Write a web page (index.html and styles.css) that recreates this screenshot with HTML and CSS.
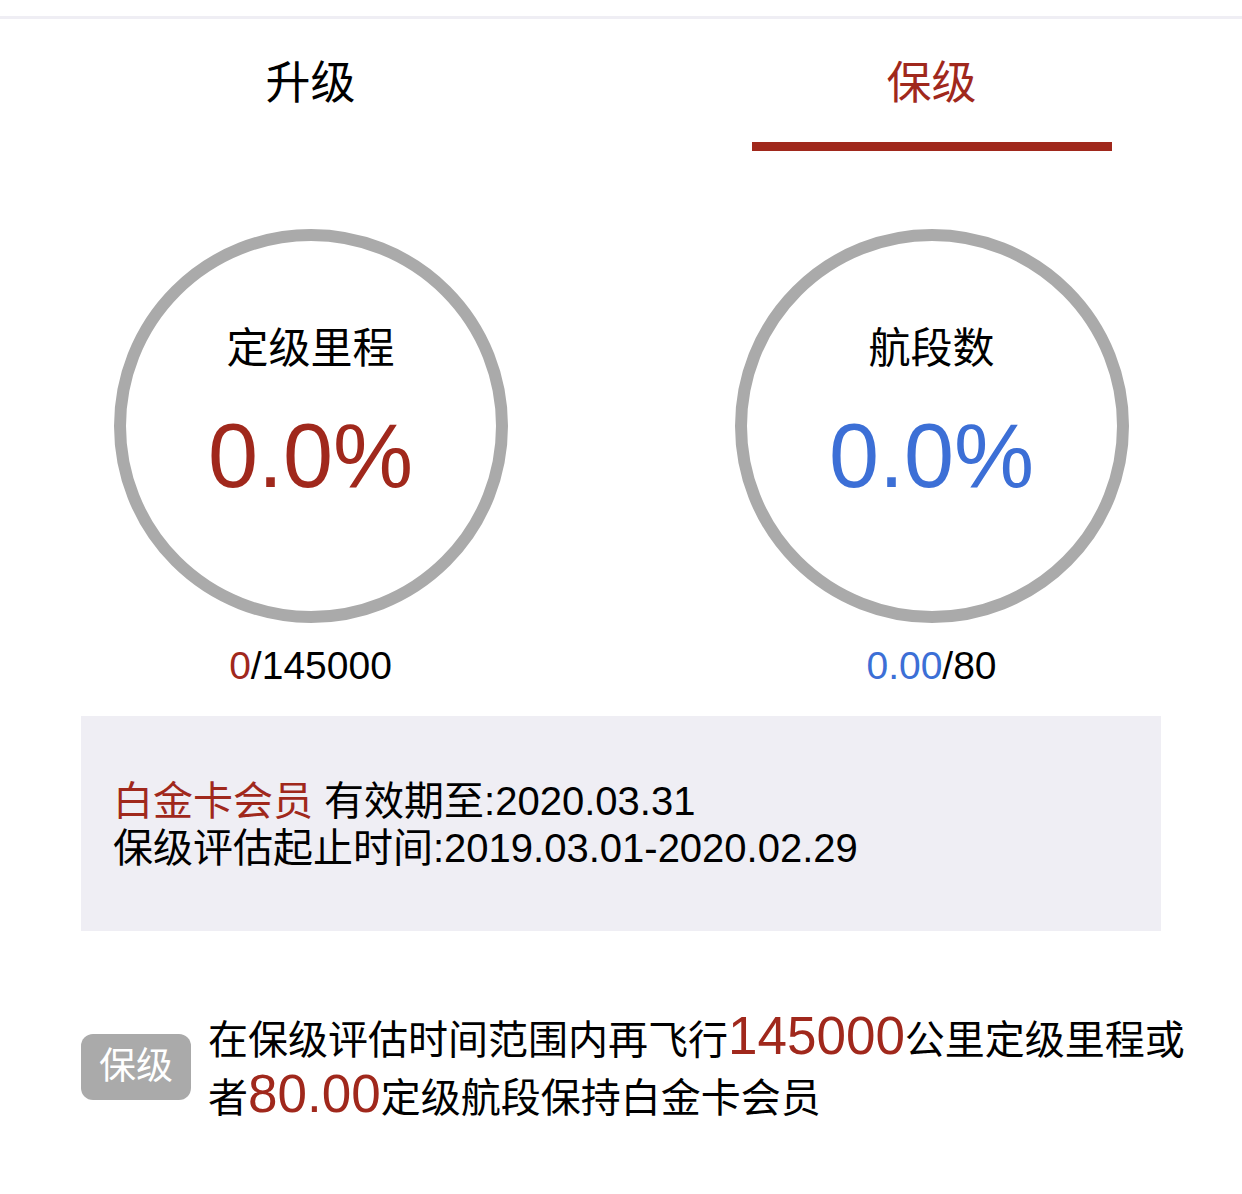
FILE: index.html
```html
<!DOCTYPE html>
<html>
<head>
  <meta charset="utf-8">
  <title>保级</title>
  <link rel="stylesheet" href="styles.css">
</head>
<body>
  <div class="page">
    <div class="tabs">
      <div class="tab">
        <span class="tab-label">升级</span>
      </div>
      <div class="tab active">
        <span class="tab-label">保级</span>
        <div class="tab-line"></div>
      </div>
    </div>

    <div class="stats">
      <div class="stat">
        <div class="ring">
          <div class="ring-title">定级里程</div>
          <div class="ring-value red">0.0%</div>
        </div>
        <div class="stat-count"><span class="red">0</span>/145000</div>
      </div>
      <div class="stat">
        <div class="ring">
          <div class="ring-title">航段数</div>
          <div class="ring-value blue">0.0%</div>
        </div>
        <div class="stat-count"><span class="blue">0.00</span>/80</div>
      </div>
    </div>

    <div class="info-box">
      <div class="info-line"><span class="red">白金卡会员</span> 有效期至:2020.03.31</div>
      <div class="info-line">保级评估起止时间:2019.03.01-2020.02.29</div>
    </div>

    <div class="tip">
      <div class="badge">保级</div>
      <p class="tip-text">在保级评估时间范围内再飞行<span class="big">145000</span>公里定级里程或者<span class="big">80.00</span>定级航段保持白金卡会员</p>
    </div>
  </div>
</body>
</html>
```

FILE: styles.css
```css
:root {
  --red: #a0281c;
  --blue: #3c6fd6;
  --text: #000;
  --ring: #aaaaaa;
  --panel: #efeef4;
}

body {
  margin: 0;
  padding: 16px 0 0 0;
  background: #fff;
  color: var(--text);
  font-family: "Liberation Sans", "Noto Sans CJK SC", sans-serif;
}

.page {
  border-top: 3px solid var(--panel);
}

.red {
  color: var(--red);
}

.blue {
  color: var(--blue);
}

.tabs {
  display: flex;
}

.tab {
  flex: 1;
  display: flex;
  flex-direction: column;
  align-items: center;
  padding-top: 37px;
}

.tab-label {
  font-size: 45px;
  line-height: 56px;
}

.tab.active .tab-label {
  color: var(--red);
}

.tab-line {
  width: 360px;
  height: 9px;
  margin-top: 30px;
  background: var(--red);
}

.stats {
  display: flex;
  margin-top: 78px;
}

.stat {
  flex: 1;
  display: flex;
  flex-direction: column;
  align-items: center;
}

.ring {
  width: 394px;
  height: 394px;
  border: 12px solid var(--ring);
  border-radius: 50%;
  box-sizing: border-box;
  display: flex;
  flex-direction: column;
  align-items: center;
  padding-top: 83px;
}

.ring-title {
  font-size: 42px;
  line-height: 50px;
}

.ring-value {
  font-size: 90px;
  line-height: 100px;
  margin-top: 32px;
}

.stat-count {
  font-size: 39px;
  line-height: 44px;
  margin-top: 21px;
}

.info-box {
  margin: 28px 81px 0 81px;
  padding: 62px 32px 59px 32px;
  background: var(--panel);
}

.info-line {
  font-size: 40px;
  line-height: 47px;
}

.tip {
  display: flex;
  align-items: center;
  margin-top: 80px;
  padding: 0 30px 0 81px;
}

.badge {
  flex-shrink: 0;
  width: 110px;
  height: 66px;
  margin-top: -4px;
  border-radius: 12px;
  background: var(--ring);
  color: #fff;
  font-size: 37px;
  line-height: 66px;
  text-align: center;
}

.tip-text {
  flex: 1;
  margin: 0 0 0 17px;
  font-size: 40px;
  line-height: 58px;
}

.big {
  color: var(--red);
  font-size: 53px;
  line-height: 40px;
}
```
